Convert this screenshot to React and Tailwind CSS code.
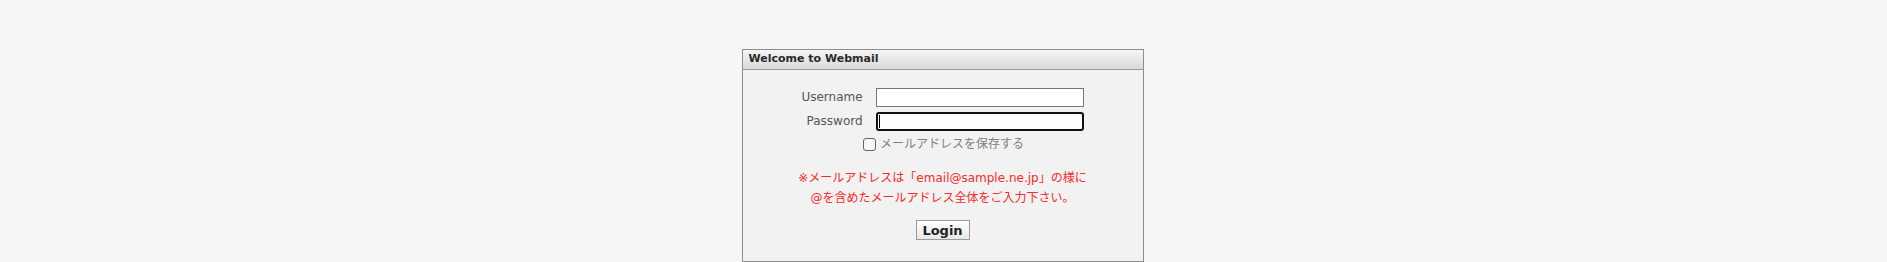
export default function App() {
  const font = { fontFamily: '"DejaVu Sans", "Noto Sans CJK JP", sans-serif' };

  return (
    <div
      className="min-h-[262px] bg-[#f6f6f6] pt-[49px] pr-[2px] flex justify-center"
      style={font}
    >
      <div className="w-[402px] h-[213px] border border-[#8e8e8e] bg-[#f2f2f2] flex flex-col">
        {/* header */}
        <div className="h-[20px] border-b border-[#9a9a9a] bg-gradient-to-b from-[#f5f5f5] to-[#d9d9d9] pl-[6px] flex items-center text-[11px] font-bold text-[#2a2a2a]">
          Welcome to Webmail
        </div>

        <div className="flex flex-col items-center pt-[18px]">
          <div className="grid grid-cols-[auto_208px] gap-x-[13px] gap-y-[5px] items-center">
            <label className="text-right text-[12px] text-[#555] leading-[19px]">
              Username
            </label>
            <input
              type="text"
              className="h-[19px] w-[208px] bg-white border border-[#777] outline-none"
            />
            <label className="text-right text-[12px] text-[#555] leading-[19px]">
              Password
            </label>
            <div className="h-[19px] w-[208px] bg-white border-2 border-[#111] rounded-[3px] flex items-center pl-[1px]">
              <div className="w-[1px] h-[13px] bg-black" />
            </div>
          </div>

          <div className="mt-[5px] h-[17px] flex items-center gap-[4px] ml-[2px]">
            <span className="w-[13px] h-[13px] border border-[#666] rounded-[3px] bg-[#f7f7f7]" />
            <span className="text-[12px] text-[#808080] leading-[17px]">
              メールアドレスを保存する
            </span>
          </div>

          <div className="mt-[15px] text-center text-[12px] leading-[20px] text-[#f52a2a]">
            <div>※メールアドレスは「email@sample.ne.jp」の様に</div>
            <div>@を含めたメールアドレス全体をご入力下さい。</div>
          </div>

          <button className="mt-[12px] h-[20px] w-[54px] border border-[#9a9a9a] bg-gradient-to-b from-white to-[#e8e8e8] text-[13px] font-bold text-[#222] leading-none">
            Login
          </button>
        </div>
      </div>
    </div>
  );
}
